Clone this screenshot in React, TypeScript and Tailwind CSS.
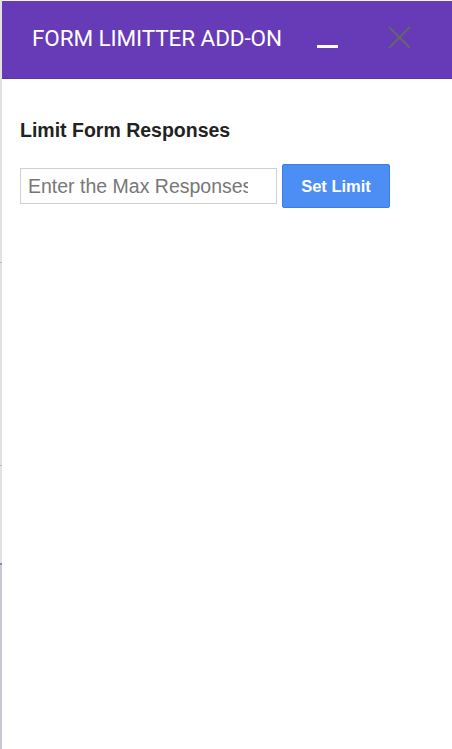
export default function App() {
  return (
    <div className="flex w-[452px] h-[749px] bg-white overflow-hidden">
      <div className="flex flex-col w-[2px] shrink-0">
        <div className="h-[262px] bg-[#e2e2e2]" />
        <div className="h-[1px] bg-[#b8b8b8]" />
        <div className="h-[202px] bg-[#e2e2e2]" />
        <div className="h-[1px] bg-[#b8b8b8]" />
        <div className="h-[97px] bg-[#e2e2e2]" />
        <div className="h-[2px] bg-[#8c8c8c]" />
        <div className="flex-1 bg-[#c8c8d6]" />
      </div>

      <div className="flex flex-col flex-1">
        <div className="h-[1px] bg-[#f3f3f3]" />
        <div className="flex items-center h-[78px] bg-[#673ab7] border-b border-[#5b33a3] pl-[30px]">
          <h1 className="mb-[3px] text-[22.5px] text-white tracking-[-0.1px] font-['Roboto',sans-serif] leading-none">
            FORM LIMITTER ADD-ON
          </h1>
          <div className="ml-[35px] mt-[14px] w-[21px] h-[3px] bg-white" />
          <svg className="ml-[50px] mb-[4px] w-[23px] h-[23px]" viewBox="0 0 23 23">
            <path d="M1 1L22 22M22 1L1 22" stroke="#666666" strokeWidth="2" />
          </svg>
        </div>

        <div className="pl-[18px] pt-[40px] font-['Liberation_Sans',Arial,sans-serif]">
          <h2 className="text-[19.5px] font-bold text-[#222222] leading-[22px]">Limit Form Responses</h2>
          <div className="flex items-center mt-[23px]">
            <input
              className="w-[257px] h-[36px] border border-[#d0d0d0] pl-[7px] pr-[28px] text-[19.5px] text-[#333] placeholder:text-[#777777] outline-none"
              placeholder="Enter the Max Responses"
            />
            <button className="ml-[5px] w-[108px] h-[44px] rounded-[2px] bg-[#4d8ef5] border border-[#3b7de8] text-white font-bold text-[16.5px]">
              Set Limit
            </button>
          </div>
        </div>
      </div>
    </div>
  )
}
